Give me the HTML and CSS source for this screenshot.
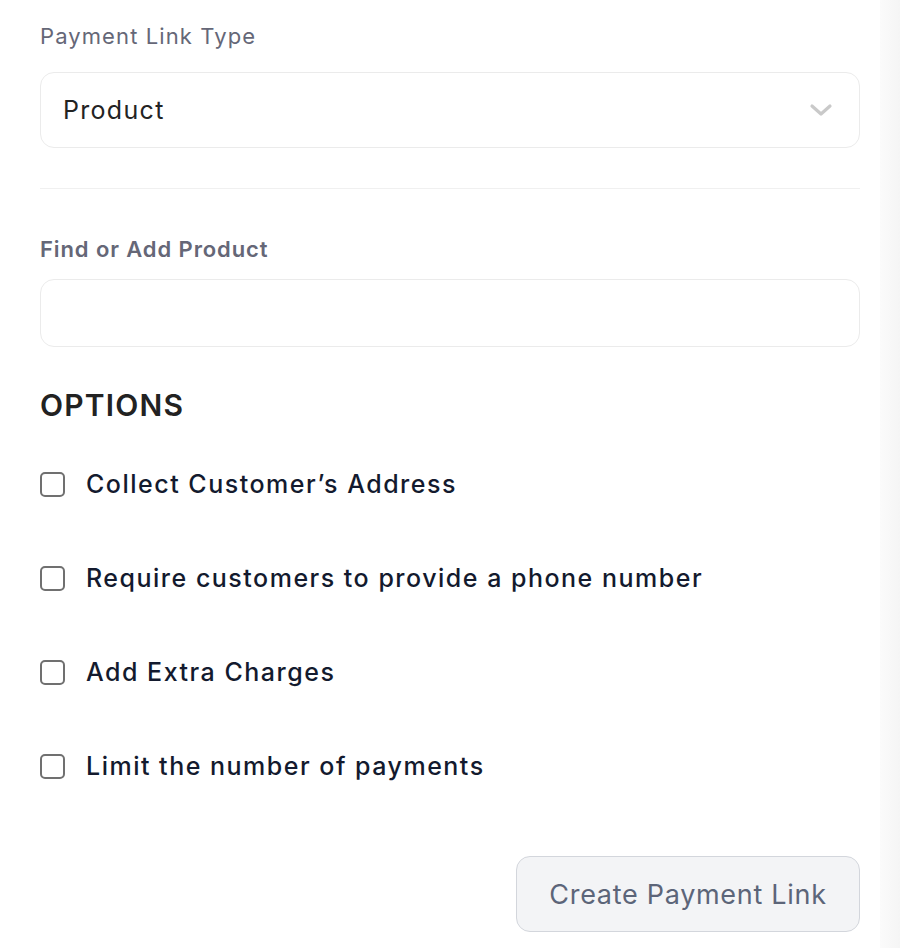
FILE: index.html
```html
<!DOCTYPE html>
<html lang="en">
<head>
<meta charset="utf-8">
<title>Payment Link</title>
<link rel="stylesheet" href="styles.css">
</head>
<body>
<div class="page">
  <main class="form">
    <div class="field">
      <label class="label">Payment Link Type</label>
      <div class="select">
        <span class="select-value">Product</span>
        <svg class="chevron" width="24" height="14" viewBox="0 0 24 14"><path d="M3 3 L12 11 L21 3" fill="none" stroke="#c9c9c9" stroke-width="3.2" stroke-linecap="round" stroke-linejoin="round"/></svg>
      </div>
    </div>
    <hr class="divider">
    <div class="field field-product">
      <label class="label label-bold">Find or Add Product</label>
      <div class="input"></div>
    </div>
    <h2 class="options-title">OPTIONS</h2>
    <ul class="options">
      <li class="option"><span class="checkbox"></span><span class="option-text">Collect Customer’s Address</span></li>
      <li class="option"><span class="checkbox"></span><span class="option-text">Require customers to provide a phone number</span></li>
      <li class="option"><span class="checkbox"></span><span class="option-text">Add Extra Charges</span></li>
      <li class="option"><span class="checkbox"></span><span class="option-text">Limit the number of payments</span></li>
    </ul>
    <div class="actions">
      <button class="btn">Create Payment Link</button>
    </div>
  </main>
  <div class="scroll-edge"></div>
</div>
</body>
</html>
```

FILE: styles.css
```css
* { box-sizing: border-box; }
html, body { margin: 0; padding: 0; background: #fff; }
body { font-family: Inter, "Noto Sans", sans-serif; }
.page { display: flex; width: 900px; height: 948px; overflow: hidden; }
.form { width: 880px; padding: 20px 20px 0 40px; flex: none; }
.scroll-edge { flex: 1; background: linear-gradient(to right, #fbfbfb, #f5f5f5); }
.field { display: flex; flex-direction: column; }
.label { font-size: 22px; letter-spacing: 1.1px; font-weight: 400; color: #656777; line-height: 32px; margin-bottom: 20px; }
.label-bold { font-weight: 600; letter-spacing: 0.9px; }
.select { height: 76px; border: 1.5px solid #ebebeb; border-radius: 14px; display: flex; align-items: center; justify-content: space-between; padding: 0 26px 0 22px; }
.select-value { font-size: 25px; letter-spacing: 1.3px; font-weight: 400; color: #232323; }
.chevron { display: block; }
.divider { border: 0; border-top: 1.5px solid #f0f0f0; margin: 40px 0 44px; }
.input { height: 68px; border: 1.5px solid #ebebeb; border-radius: 14px; }
.field-product .label { margin-bottom: 14px; }
.options-title { font-size: 30px; letter-spacing: 1.2px; font-weight: 600; color: #222; margin: 40px 0 45px; line-height: 36px; }
.options { list-style: none; margin: 0; padding: 0; display: flex; flex-direction: column; gap: 62px; }
.option { display: flex; align-items: center; gap: 21px; height: 32px; }
.checkbox { width: 25px; height: 25px; border: 2px solid #707070; border-radius: 5px; flex: none; }
.option-text { font-size: 25px; letter-spacing: 1.5px; font-weight: 500; color: #131a2e; }
.actions { display: flex; justify-content: flex-end; margin-top: 74px; }
.btn { width: 344px; height: 76px; border: 1.5px solid #d3d6dc; background: #f3f4f6; border-radius: 14px; font-family: Inter, sans-serif; font-size: 27px; letter-spacing: 0.7px; font-weight: 400; color: #5c6579; }
```
